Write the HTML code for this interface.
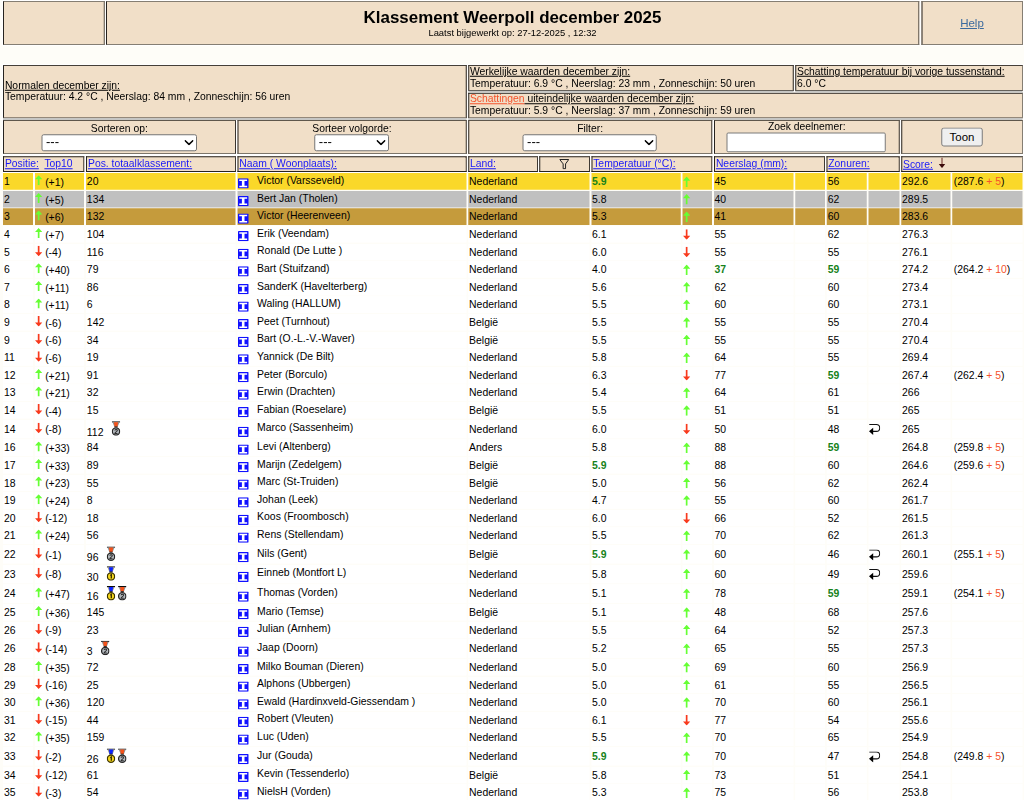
<!DOCTYPE html>
<html lang="nl"><head><meta charset="utf-8"><title>Klassement Weerpoll december 2025</title>
<style>
html,body{margin:0;padding:0;background:#fefdf8;overflow:hidden;}
body{width:1024px;height:800px;position:relative;font-family:"Liberation Sans",sans-serif;}
#w{position:absolute;left:0;top:0;width:4096px;height:3200px;transform:scale(0.25);transform-origin:0 0;
font-size:41.4px;line-height:47.2px;color:#000;overflow:hidden;}
#w *{box-sizing:border-box;}
.wb{position:absolute;background:#fff;}
.gg{position:absolute;background:#c6c6c4;}
.b{position:absolute;background:#f1dfc8;border:4.8px solid #24211e;}
.t{position:absolute;white-space:nowrap;}
.ct{position:absolute;white-space:nowrap;text-align:center;}
u,.l{text-decoration:underline;text-decoration-thickness:3.8px;text-underline-offset:4px;}
.l{color:#1818f8;}
.o{color:#f5532c;}
svg{position:absolute;overflow:visible;}
.sel{position:absolute;background:#fff;border:4px solid #747474;border-radius:8.8px;}
.inp{position:absolute;background:#fff;border:4px solid #7a7a7a;border-radius:6.4px;}
.btn{position:absolute;background:#efefef;border:4px solid #7a7a7a;border-radius:10.4px;text-align:center;font-size:45.8px;white-space:nowrap;}
.r{position:absolute;left:0;width:4096px;height:66.8px;}
.r.m{height:75.2px;}
.r i{position:absolute;top:0;height:100%;background:#fff;font-style:normal;white-space:nowrap;padding-left:3.6px;font-size:41.7px;line-height:68px;}
.r.m i{line-height:76.4px;}
.g i{background:#fad829;}
.s i{background:#c0c0c0;}
.z i{background:#c59b3c;}
.r b{color:#17821a;}

.c1{left:12px;width:120px;}
.c2{left:139.6px;width:196.4px;}
.c3{left:344px;width:598.4px;}
.c4{left:950px;width:915.6px;}
.c5{left:1872.8px;width:485.2px;}
.c6{left:2366px;width:357.2px;}
.c7{left:2730.4px;width:117.6px;}
.c8{left:2856.4px;width:317.6px;}
.c9{left:3181.2px;width:118.8px;}
.c10{left:3307.2px;width:160px;}
.c11{left:3474.4px;width:123.2px;}
.c12{left:3604.8px;width:197.2px;}
.c13{left:3809.2px;width:281.2px;}
.r .c2{padding-left:41px;padding-top:2.8px;}
.r .c4{padding-left:78.4px;line-height:57.2px;}
.r.m .c4{line-height:65.6px;}
.r.m .c3{padding-top:12px;}
.r .c1{padding-left:4.2px;}.r .c3{padding-left:3.4px;}.r .c6{padding-left:1.8px;}.r .c8{padding-left:1.4px;}.r .c10{padding-left:3.4px;}.r .c12{padding-left:3.4px;}.r .c13{padding-left:6px;}</style></head>
<body><div id="w">

<svg style="width:0;height:0;left:0;top:0" aria-hidden="true"><defs>
<symbol id="up" viewBox="0 0 7.3 10" preserveAspectRatio="none"><path d="M3.65 0 L7.3 4 L4.5 4 L4.5 10 L2.8 10 L2.8 4 L0 4Z" fill="#66ff33"/></symbol>
<symbol id="dn" viewBox="0 0 7.3 10.5" preserveAspectRatio="none"><path d="M3.65 10.5 L7.3 6.5 L4.5 6.5 L4.5 0 L2.8 0 L2.8 6.5 L0 6.5Z" fill="#f83a1c"/></symbol>
<symbol id="ic" viewBox="0 0 11 11" preserveAspectRatio="none"><rect width="11" height="11" rx="0.8" fill="#1010ff"/><path d="M1.3 1.3H9.4V2.9H6.7V8.1H9.4V9.7H1.3V8.1H4V2.9H1.3Z" fill="#fff"/></symbol>
<symbol id="ret" viewBox="0 0 11.2 11" preserveAspectRatio="none"><path d="M0.3 0.55H7.3 A3.4 3.4 0 0 1 7.3 7.35 H4" fill="none" stroke="#111" stroke-width="1.05"/><path d="M0 7.3 L4.2 3.8 L4.2 10.9Z" fill="#000"/></symbol>
<symbol id="fil" viewBox="0 0 10 10.4" preserveAspectRatio="none"><path d="M0.5 0.5H9.5L6.3 4.9V9.7L3.9 9.7V4.9Z" fill="none" stroke="#222" stroke-width="1" stroke-linejoin="round"/></symbol>
<symbol id="chv" viewBox="0 0 9 5.4" preserveAspectRatio="none"><path d="M0.7 0.7L4.5 4.4L8.3 0.7" fill="none" stroke="#000" stroke-width="1.55" stroke-linecap="round" stroke-linejoin="round"/></symbol>
<symbol id="sar" viewBox="0 0 6.2 10.6" preserveAspectRatio="none"><path d="M3.1 0V8" stroke="#7a4038" stroke-width="1.1"/><path d="M0 6.6H6.2L3.1 10.6Z" fill="#3d0c0c"/></symbol>
<symbol id="mg" viewBox="0 0 8.2 14.6" preserveAspectRatio="none"><rect x="0.1" y="0" width="8" height="1.15" fill="#0c0c0c"/><path d="M0.7 1.1H7.5L5.7 5.6H2.5Z" fill="#8f8f8f"/><path d="M2.1 1.1H6.1L5.5 5.5H2.7Z" fill="#0a22ff"/><rect x="2.6" y="5.2" width="3" height="0.9" fill="#1c1c1c"/><circle cx="4.1" cy="10.3" r="3.55" fill="#f3d51c" stroke="#3e3500" stroke-width="1.25"/><path d="M3.4 9.2L4.4 8.4V12.3" stroke="#2e2600" stroke-width="1.2" fill="none"/></symbol>
<symbol id="ms" viewBox="0 0 8.2 14.6" preserveAspectRatio="none"><rect x="0.1" y="0" width="8" height="1.15" fill="#0c0c0c"/><path d="M0.7 1.1H7.5L5.7 5.6H2.5Z" fill="#8f8f8f"/><path d="M2.1 1.1H6.1L5.5 5.5H2.7Z" fill="#f4521a"/><rect x="2.6" y="5.2" width="3" height="0.9" fill="#1c1c1c"/><circle cx="4.1" cy="10.3" r="3.55" fill="#b4b9be" stroke="#262626" stroke-width="1.25"/><path d="M3 9.3C3.2 8 5.4 8 5.4 9.3C5.4 10.4 3.2 11 3 12.2H5.6" stroke="#2c2c2c" stroke-width="1" fill="none"/></symbol>
</defs></svg>

<div class="wb" style="left:7px;top:0px;width:4089px;height:184px;"></div>
<div class="wb" style="left:7px;top:256px;width:4089px;height:436px;"></div>
<div class="b" style="left:12px;top:4px;width:407.2px;height:176px;border-color:#857e73 #5b544b #857e73 #27231f;"></div>
<div class="b" style="left:424px;top:4px;width:3253.2px;height:176px;border-color:#857e73 #5b544b #857e73 #27231f;"></div>
<div class="b" style="left:3685.6px;top:4px;width:406px;height:176px;border-color:#857e73 #857e73 #857e73 #27231f;"></div>
<div class="ct" style="left:424px;width:3252px;top:28.4px;font-size:67.7px;line-height:77.1px;font-weight:bold;">Klassement Weerpoll december 2025</div>
<div class="ct" style="left:424px;width:3252px;top:109.2px;font-size:37.6px;line-height:42.8px;">Laatst bijgewerkt op: 27-12-2025 , 12:32</div>
<div class="ct" style="left:3685.6px;width:404.8px;top:65.5px;font-size:46px;line-height:52.4px;"><span class="l" style="color:#3b6a9e">Help</span></div>
<div class="b" style="left:12px;top:260px;width:1854.8px;height:213.2px;border-color:#453f38 #27231f #756c60 #27231f;"></div>
<div class="b" style="left:1872.8px;top:260px;width:1302.4px;height:103.6px;border-color:#453f38 #27231f #453f38 #27231f;"></div>
<div class="b" style="left:3180.8px;top:260px;width:910.8px;height:103.6px;border-color:#453f38 #857e73 #453f38 #27231f;"></div>
<div class="b" style="left:1872.8px;top:370.8px;width:2218.8px;height:102.4px;border-color:#27231f #857e73 #756c60 #27231f;"></div>
<div class="gg" style="left:1872.8px;top:362.8px;width:1301.2px;height:8px;"></div>
<div class="gg" style="left:3180.8px;top:362.8px;width:909.6px;height:8px;"></div>
<div class="gg" style="left:12px;top:472.4px;width:1853.6px;height:7.6px;"></div>
<div class="gg" style="left:1872.8px;top:472.4px;width:2217.6px;height:7.6px;"></div>
<div class="t" style="left:19.6px;top:318px;"><u>Normalen december zijn:</u></div>
<div class="t" style="left:19.6px;top:364.4px;">Temperatuur: 4.2 °C , Neerslag: 84 mm , Zonneschijn: 56 uren</div>
<div class="t" style="left:1879.6px;top:262px;"><u>Werkelijke waarden december zijn:</u></div>
<div class="t" style="left:1879.6px;top:308.8px;">Temperatuur: 6.9 °C , Neerslag: 23 mm , Zonneschijn: 50 uren</div>
<div class="t" style="left:3188px;top:262px;"><u>Schatting temperatuur bij vorige tussenstand:</u></div>
<div class="t" style="left:3188px;top:308.8px;">6.0 °C</div>
<div class="t" style="left:1879.6px;top:372.4px;"><u class="o">Schattingen</u><u> uiteindelijke waarden december zijn:</u></div>
<div class="t" style="left:1879.6px;top:419.2px;">Temperatuur: 5.9 °C , Neerslag: 37 mm , Zonneschijn: 59 uren</div>
<div class="b" style="left:12px;top:480px;width:931.6px;height:136px;border-color:#5f574c #3a352f #7d766b #27231f;"></div>
<div class="b" style="left:950px;top:480px;width:916.8px;height:136px;border-color:#5f574c #3a352f #7d766b #27231f;"></div>
<div class="b" style="left:1872.8px;top:480px;width:976.4px;height:136px;border-color:#5f574c #3a352f #7d766b #27231f;"></div>
<div class="b" style="left:2856.4px;top:480px;width:742.4px;height:136px;border-color:#5f574c #3a352f #7d766b #27231f;"></div>
<div class="b" style="left:3604.8px;top:480px;width:486.8px;height:136px;border-color:#5f574c #857e73 #7d766b #27231f;"></div>
<div class="ct" style="left:12px;width:930.4px;top:489.2px;">Sorteren op:</div>
<div class="ct" style="left:950px;width:915.6px;top:489.2px;">Sorteer volgorde:</div>
<div class="ct" style="left:1872.8px;width:975.2px;top:489.2px;">Filter:</div>
<div class="ct" style="left:2856.4px;width:741.2px;top:484px;">Zoek deelnemer:</div>
<div class="sel" style="left:165.6px;top:537.2px;width:622px;height:67.6px;"></div>
<div class="t" style="left:184px;top:538.4px;font-size:52.4px;line-height:59.7px;">---</div>
<svg style="left:738px;top:560px;width:36px;height:21.6px"><use href="#chv"/></svg>
<div class="sel" style="left:1256.8px;top:537.2px;width:299.2px;height:67.6px;"></div>
<div class="t" style="left:1275.2px;top:538.4px;font-size:52.4px;line-height:59.7px;">---</div>
<svg style="left:1506.4px;top:560px;width:36px;height:21.6px"><use href="#chv"/></svg>
<div class="sel" style="left:2090px;top:537.2px;width:537.2px;height:67.6px;"></div>
<div class="t" style="left:2108.4px;top:538.4px;font-size:52.4px;line-height:59.7px;">---</div>
<svg style="left:2577.6px;top:560px;width:36px;height:21.6px"><use href="#chv"/></svg>
<div class="inp" style="left:2905.6px;top:530.4px;width:637.6px;height:78.4px;"></div>
<div class="btn" style="left:3764.8px;top:510.4px;width:166px;height:76px;line-height:68px;">Toon</div>
<div class="b" style="left:12px;top:624.8px;width:325.2px;height:63.2px;border-color:#27231f #403a34 #27231f #27231f;"></div>
<div class="b" style="left:344px;top:624.8px;width:599.6px;height:63.2px;border-color:#27231f #403a34 #27231f #27231f;"></div>
<div class="b" style="left:950px;top:624.8px;width:916.8px;height:63.2px;border-color:#27231f #403a34 #27231f #27231f;"></div>
<div class="b" style="left:1872.8px;top:624.8px;width:278.8px;height:63.2px;border-color:#27231f #403a34 #27231f #27231f;"></div>
<div class="b" style="left:2157.2px;top:624.8px;width:202.4px;height:63.2px;border-color:#27231f #403a34 #27231f #27231f;"></div>
<div class="b" style="left:2365.6px;top:624.8px;width:483.6px;height:63.2px;border-color:#27231f #403a34 #27231f #27231f;"></div>
<div class="b" style="left:2856.4px;top:624.8px;width:443.6px;height:63.2px;border-color:#27231f #403a34 #27231f #27231f;"></div>
<div class="b" style="left:3306.4px;top:624.8px;width:292.4px;height:63.2px;border-color:#27231f #403a34 #27231f #27231f;"></div>
<div class="b" style="left:3604.8px;top:624.8px;width:486.8px;height:63.2px;border-color:#27231f #857e73 #27231f #27231f;"></div>
<div class="t" style="left:19.6px;top:632px;"><span class="l">Positie:</span></div>
<div class="t" style="left:177.6px;top:632px;"><span class="l">Top10</span></div>
<div class="t" style="left:352px;top:632px;"><span class="l">Pos. totaalklassement:</span></div>
<div class="t" style="left:957.2px;top:632px;"><span class="l">Naam ( Woonplaats):</span></div>
<div class="t" style="left:1880px;top:632px;"><span class="l">Land:</span></div>
<svg style="left:2236.8px;top:636px;width:40px;height:41.6px"><use href="#fil"/></svg>
<div class="t" style="left:2372.8px;top:632px;"><span class="l">Temperatuur (°C):</span></div>
<div class="t" style="left:2863.6px;top:632px;"><span class="l">Neerslag (mm):</span></div>
<div class="t" style="left:3313.2px;top:632px;"><span class="l">Zonuren:</span></div>
<div class="t" style="left:3612px;top:634px;"><span class="l">Score:</span></div>
<svg style="left:3754.8px;top:630.4px;width:26px;height:42.4px"><use href="#sar"/></svg>
<div class="r g" style="top:692.4px"><i class="c1">1</i><i class="c2"><svg style="left:0.8px;top:8.8px;width:29.2px;height:40px"><use href="#up"/></svg>(+1)</i><i class="c3">20</i><i class="c4"><svg style="left:1.6px;top:20.8px;width:42.8px;height:40.8px"><use href="#ic"/></svg>Victor (Varsseveld)</i><i class="c5">Nederland</i><i class="c6"><b>5.9</b></i><i class="c7"><svg style="left:1.2px;top:13.2px;width:29.2px;height:41.6px"><use href="#up"/></svg></i><i class="c8">45</i><i class="c9"></i><i class="c10">56</i><i class="c11"></i><i class="c12">292.6</i><i class="c13">(287.6 <span class="o">+ 5</span>)</i></div>
<div class="r s" style="top:762.8px"><i class="c1">2</i><i class="c2"><svg style="left:0.8px;top:8.8px;width:29.2px;height:40px"><use href="#up"/></svg>(+5)</i><i class="c3">134</i><i class="c4"><svg style="left:1.6px;top:20.8px;width:42.8px;height:40.8px"><use href="#ic"/></svg>Bert Jan (Tholen)</i><i class="c5">Nederland</i><i class="c6">5.8</i><i class="c7"><svg style="left:1.2px;top:13.2px;width:29.2px;height:41.6px"><use href="#up"/></svg></i><i class="c8">40</i><i class="c9"></i><i class="c10">62</i><i class="c11"></i><i class="c12">289.5</i><i class="c13"></i></div>
<div class="r z" style="top:833.2px"><i class="c1">3</i><i class="c2"><svg style="left:0.8px;top:8.8px;width:29.2px;height:40px"><use href="#up"/></svg>(+6)</i><i class="c3">132</i><i class="c4"><svg style="left:1.6px;top:20.8px;width:42.8px;height:40.8px"><use href="#ic"/></svg>Victor (Heerenveen)</i><i class="c5">Nederland</i><i class="c6">5.3</i><i class="c7"><svg style="left:1.2px;top:13.2px;width:29.2px;height:41.6px"><use href="#up"/></svg></i><i class="c8">41</i><i class="c9"></i><i class="c10">60</i><i class="c11"></i><i class="c12">283.6</i><i class="c13"></i></div>
<div class="r" style="top:903.6px"><i class="c1">4</i><i class="c2"><svg style="left:0.8px;top:8.8px;width:29.2px;height:40px"><use href="#up"/></svg>(+7)</i><i class="c3">104</i><i class="c4"><svg style="left:1.6px;top:20.8px;width:42.8px;height:40.8px"><use href="#ic"/></svg>Erik (Veendam)</i><i class="c5">Nederland</i><i class="c6">6.1</i><i class="c7"><svg style="left:1.2px;top:13.2px;width:29.2px;height:42.4px"><use href="#dn"/></svg></i><i class="c8">55</i><i class="c9"></i><i class="c10">62</i><i class="c11"></i><i class="c12">276.3</i><i class="c13"></i></div>
<div class="r" style="top:974px"><i class="c1">5</i><i class="c2"><svg style="left:0.8px;top:8.8px;width:29.2px;height:42px"><use href="#dn"/></svg>(-4)</i><i class="c3">116</i><i class="c4"><svg style="left:1.6px;top:20.8px;width:42.8px;height:40.8px"><use href="#ic"/></svg>Ronald (De Lutte )</i><i class="c5">Nederland</i><i class="c6">6.0</i><i class="c7"><svg style="left:1.2px;top:13.2px;width:29.2px;height:42.4px"><use href="#dn"/></svg></i><i class="c8">55</i><i class="c9"></i><i class="c10">55</i><i class="c11"></i><i class="c12">276.1</i><i class="c13"></i></div>
<div class="r" style="top:1044.4px"><i class="c1">6</i><i class="c2"><svg style="left:0.8px;top:8.8px;width:29.2px;height:40px"><use href="#up"/></svg>(+40)</i><i class="c3">79</i><i class="c4"><svg style="left:1.6px;top:20.8px;width:42.8px;height:40.8px"><use href="#ic"/></svg>Bart (Stuifzand)</i><i class="c5">Nederland</i><i class="c6">4.0</i><i class="c7"><svg style="left:1.2px;top:13.2px;width:29.2px;height:41.6px"><use href="#up"/></svg></i><i class="c8"><b>37</b></i><i class="c9"></i><i class="c10"><b>59</b></i><i class="c11"></i><i class="c12">274.2</i><i class="c13">(264.2 <span class="o">+ 10</span>)</i></div>
<div class="r" style="top:1114.8px"><i class="c1">7</i><i class="c2"><svg style="left:0.8px;top:8.8px;width:29.2px;height:40px"><use href="#up"/></svg>(+11)</i><i class="c3">86</i><i class="c4"><svg style="left:1.6px;top:20.8px;width:42.8px;height:40.8px"><use href="#ic"/></svg>SanderK (Havelterberg)</i><i class="c5">Nederland</i><i class="c6">5.6</i><i class="c7"><svg style="left:1.2px;top:13.2px;width:29.2px;height:41.6px"><use href="#up"/></svg></i><i class="c8">62</i><i class="c9"></i><i class="c10">60</i><i class="c11"></i><i class="c12">273.4</i><i class="c13"></i></div>
<div class="r" style="top:1185.2px"><i class="c1">8</i><i class="c2"><svg style="left:0.8px;top:8.8px;width:29.2px;height:40px"><use href="#up"/></svg>(+11)</i><i class="c3">6</i><i class="c4"><svg style="left:1.6px;top:20.8px;width:42.8px;height:40.8px"><use href="#ic"/></svg>Waling (HALLUM)</i><i class="c5">Nederland</i><i class="c6">5.5</i><i class="c7"><svg style="left:1.2px;top:13.2px;width:29.2px;height:41.6px"><use href="#up"/></svg></i><i class="c8">60</i><i class="c9"></i><i class="c10">60</i><i class="c11"></i><i class="c12">273.1</i><i class="c13"></i></div>
<div class="r" style="top:1255.6px"><i class="c1">9</i><i class="c2"><svg style="left:0.8px;top:8.8px;width:29.2px;height:42px"><use href="#dn"/></svg>(-6)</i><i class="c3">142</i><i class="c4"><svg style="left:1.6px;top:20.8px;width:42.8px;height:40.8px"><use href="#ic"/></svg>Peet (Turnhout)</i><i class="c5">België</i><i class="c6">5.5</i><i class="c7"><svg style="left:1.2px;top:13.2px;width:29.2px;height:41.6px"><use href="#up"/></svg></i><i class="c8">55</i><i class="c9"></i><i class="c10">55</i><i class="c11"></i><i class="c12">270.4</i><i class="c13"></i></div>
<div class="r" style="top:1326px"><i class="c1">9</i><i class="c2"><svg style="left:0.8px;top:8.8px;width:29.2px;height:42px"><use href="#dn"/></svg>(-6)</i><i class="c3">34</i><i class="c4"><svg style="left:1.6px;top:20.8px;width:42.8px;height:40.8px"><use href="#ic"/></svg>Bart (O.-L.-V.-Waver)</i><i class="c5">België</i><i class="c6">5.5</i><i class="c7"><svg style="left:1.2px;top:13.2px;width:29.2px;height:41.6px"><use href="#up"/></svg></i><i class="c8">55</i><i class="c9"></i><i class="c10">55</i><i class="c11"></i><i class="c12">270.4</i><i class="c13"></i></div>
<div class="r" style="top:1396.4px"><i class="c1">11</i><i class="c2"><svg style="left:0.8px;top:8.8px;width:29.2px;height:42px"><use href="#dn"/></svg>(-6)</i><i class="c3">19</i><i class="c4"><svg style="left:1.6px;top:20.8px;width:42.8px;height:40.8px"><use href="#ic"/></svg>Yannick (De Bilt)</i><i class="c5">Nederland</i><i class="c6">5.8</i><i class="c7"><svg style="left:1.2px;top:13.2px;width:29.2px;height:41.6px"><use href="#up"/></svg></i><i class="c8">64</i><i class="c9"></i><i class="c10">55</i><i class="c11"></i><i class="c12">269.4</i><i class="c13"></i></div>
<div class="r" style="top:1466.8px"><i class="c1">12</i><i class="c2"><svg style="left:0.8px;top:8.8px;width:29.2px;height:40px"><use href="#up"/></svg>(+21)</i><i class="c3">91</i><i class="c4"><svg style="left:1.6px;top:20.8px;width:42.8px;height:40.8px"><use href="#ic"/></svg>Peter (Borculo)</i><i class="c5">Nederland</i><i class="c6">6.3</i><i class="c7"><svg style="left:1.2px;top:13.2px;width:29.2px;height:42.4px"><use href="#dn"/></svg></i><i class="c8">77</i><i class="c9"></i><i class="c10"><b>59</b></i><i class="c11"></i><i class="c12">267.4</i><i class="c13">(262.4 <span class="o">+ 5</span>)</i></div>
<div class="r" style="top:1537.2px"><i class="c1">13</i><i class="c2"><svg style="left:0.8px;top:8.8px;width:29.2px;height:40px"><use href="#up"/></svg>(+21)</i><i class="c3">32</i><i class="c4"><svg style="left:1.6px;top:20.8px;width:42.8px;height:40.8px"><use href="#ic"/></svg>Erwin (Drachten)</i><i class="c5">Nederland</i><i class="c6">5.4</i><i class="c7"><svg style="left:1.2px;top:13.2px;width:29.2px;height:41.6px"><use href="#up"/></svg></i><i class="c8">64</i><i class="c9"></i><i class="c10">61</i><i class="c11"></i><i class="c12">266</i><i class="c13"></i></div>
<div class="r" style="top:1607.6px"><i class="c1">14</i><i class="c2"><svg style="left:0.8px;top:8.8px;width:29.2px;height:42px"><use href="#dn"/></svg>(-4)</i><i class="c3">15</i><i class="c4"><svg style="left:1.6px;top:20.8px;width:42.8px;height:40.8px"><use href="#ic"/></svg>Fabian (Roeselare)</i><i class="c5">België</i><i class="c6">5.5</i><i class="c7"><svg style="left:1.2px;top:13.2px;width:29.2px;height:41.6px"><use href="#up"/></svg></i><i class="c8">51</i><i class="c9"></i><i class="c10">51</i><i class="c11"></i><i class="c12">265</i><i class="c13"></i></div>
<div class="r m" style="top:1678px"><i class="c1">14</i><i class="c2"><svg style="left:0.8px;top:13px;width:29.2px;height:42px"><use href="#dn"/></svg>(-8)</i><i class="c3">112<svg style="left:102.7px;top:6.8px;width:34px;height:58.4px"><use href="#ms"/></svg></i><i class="c4"><svg style="left:1.6px;top:29.2px;width:42.8px;height:40.8px"><use href="#ic"/></svg>Marco (Sassenheim)</i><i class="c5">Nederland</i><i class="c6">6.0</i><i class="c7"><svg style="left:1.2px;top:17.4px;width:29.2px;height:42.4px"><use href="#dn"/></svg></i><i class="c8">50</i><i class="c9"></i><i class="c10">48</i><i class="c11"><svg style="left:1.6px;top:18.4px;width:44.8px;height:44px"><use href="#ret"/></svg></i><i class="c12">265</i><i class="c13"></i></div>
<div class="r" style="top:1756.8px"><i class="c1">16</i><i class="c2"><svg style="left:0.8px;top:8.8px;width:29.2px;height:40px"><use href="#up"/></svg>(+33)</i><i class="c3">84</i><i class="c4"><svg style="left:1.6px;top:20.8px;width:42.8px;height:40.8px"><use href="#ic"/></svg>Levi (Altenberg)</i><i class="c5">Anders</i><i class="c6">5.8</i><i class="c7"><svg style="left:1.2px;top:13.2px;width:29.2px;height:41.6px"><use href="#up"/></svg></i><i class="c8">88</i><i class="c9"></i><i class="c10"><b>59</b></i><i class="c11"></i><i class="c12">264.8</i><i class="c13">(259.8 <span class="o">+ 5</span>)</i></div>
<div class="r" style="top:1827.2px"><i class="c1">17</i><i class="c2"><svg style="left:0.8px;top:8.8px;width:29.2px;height:40px"><use href="#up"/></svg>(+33)</i><i class="c3">89</i><i class="c4"><svg style="left:1.6px;top:20.8px;width:42.8px;height:40.8px"><use href="#ic"/></svg>Marijn (Zedelgem)</i><i class="c5">België</i><i class="c6"><b>5.9</b></i><i class="c7"><svg style="left:1.2px;top:13.2px;width:29.2px;height:41.6px"><use href="#up"/></svg></i><i class="c8">88</i><i class="c9"></i><i class="c10">60</i><i class="c11"></i><i class="c12">264.6</i><i class="c13">(259.6 <span class="o">+ 5</span>)</i></div>
<div class="r" style="top:1897.6px"><i class="c1">18</i><i class="c2"><svg style="left:0.8px;top:8.8px;width:29.2px;height:40px"><use href="#up"/></svg>(+23)</i><i class="c3">55</i><i class="c4"><svg style="left:1.6px;top:20.8px;width:42.8px;height:40.8px"><use href="#ic"/></svg>Marc (St-Truiden)</i><i class="c5">België</i><i class="c6">5.0</i><i class="c7"><svg style="left:1.2px;top:13.2px;width:29.2px;height:41.6px"><use href="#up"/></svg></i><i class="c8">56</i><i class="c9"></i><i class="c10">62</i><i class="c11"></i><i class="c12">262.4</i><i class="c13"></i></div>
<div class="r" style="top:1968px"><i class="c1">19</i><i class="c2"><svg style="left:0.8px;top:8.8px;width:29.2px;height:40px"><use href="#up"/></svg>(+24)</i><i class="c3">8</i><i class="c4"><svg style="left:1.6px;top:20.8px;width:42.8px;height:40.8px"><use href="#ic"/></svg>Johan (Leek)</i><i class="c5">Nederland</i><i class="c6">4.7</i><i class="c7"><svg style="left:1.2px;top:13.2px;width:29.2px;height:41.6px"><use href="#up"/></svg></i><i class="c8">55</i><i class="c9"></i><i class="c10">60</i><i class="c11"></i><i class="c12">261.7</i><i class="c13"></i></div>
<div class="r" style="top:2038.4px"><i class="c1">20</i><i class="c2"><svg style="left:0.8px;top:8.8px;width:29.2px;height:42px"><use href="#dn"/></svg>(-12)</i><i class="c3">18</i><i class="c4"><svg style="left:1.6px;top:20.8px;width:42.8px;height:40.8px"><use href="#ic"/></svg>Koos (Froombosch)</i><i class="c5">Nederland</i><i class="c6">6.0</i><i class="c7"><svg style="left:1.2px;top:13.2px;width:29.2px;height:42.4px"><use href="#dn"/></svg></i><i class="c8">66</i><i class="c9"></i><i class="c10">52</i><i class="c11"></i><i class="c12">261.5</i><i class="c13"></i></div>
<div class="r" style="top:2108.8px"><i class="c1">21</i><i class="c2"><svg style="left:0.8px;top:8.8px;width:29.2px;height:40px"><use href="#up"/></svg>(+24)</i><i class="c3">56</i><i class="c4"><svg style="left:1.6px;top:20.8px;width:42.8px;height:40.8px"><use href="#ic"/></svg>Rens (Stellendam)</i><i class="c5">Nederland</i><i class="c6">5.5</i><i class="c7"><svg style="left:1.2px;top:13.2px;width:29.2px;height:41.6px"><use href="#up"/></svg></i><i class="c8">70</i><i class="c9"></i><i class="c10">62</i><i class="c11"></i><i class="c12">261.3</i><i class="c13"></i></div>
<div class="r m" style="top:2179.2px"><i class="c1">22</i><i class="c2"><svg style="left:0.8px;top:13px;width:29.2px;height:42px"><use href="#dn"/></svg>(-1)</i><i class="c3">96<svg style="left:82.7px;top:6.8px;width:34px;height:58.4px"><use href="#ms"/></svg></i><i class="c4"><svg style="left:1.6px;top:29.2px;width:42.8px;height:40.8px"><use href="#ic"/></svg>Nils (Gent)</i><i class="c5">België</i><i class="c6"><b>5.9</b></i><i class="c7"><svg style="left:1.2px;top:17.4px;width:29.2px;height:41.6px"><use href="#up"/></svg></i><i class="c8">60</i><i class="c9"></i><i class="c10">46</i><i class="c11"><svg style="left:1.6px;top:18.4px;width:44.8px;height:44px"><use href="#ret"/></svg></i><i class="c12">260.1</i><i class="c13">(255.1 <span class="o">+ 5</span>)</i></div>
<div class="r m" style="top:2258px"><i class="c1">23</i><i class="c2"><svg style="left:0.8px;top:13px;width:29.2px;height:42px"><use href="#dn"/></svg>(-8)</i><i class="c3">30<svg style="left:82.7px;top:6.8px;width:34px;height:58.4px"><use href="#mg"/></svg></i><i class="c4"><svg style="left:1.6px;top:29.2px;width:42.8px;height:40.8px"><use href="#ic"/></svg>Einneb (Montfort L)</i><i class="c5">Nederland</i><i class="c6">5.8</i><i class="c7"><svg style="left:1.2px;top:17.4px;width:29.2px;height:41.6px"><use href="#up"/></svg></i><i class="c8">60</i><i class="c9"></i><i class="c10">49</i><i class="c11"><svg style="left:1.6px;top:18.4px;width:44.8px;height:44px"><use href="#ret"/></svg></i><i class="c12">259.6</i><i class="c13"></i></div>
<div class="r m" style="top:2336.8px"><i class="c1">24</i><i class="c2"><svg style="left:0.8px;top:13px;width:29.2px;height:40px"><use href="#up"/></svg>(+47)</i><i class="c3">16<svg style="left:82.7px;top:6.8px;width:34px;height:58.4px"><use href="#mg"/></svg><svg style="left:128.3px;top:6.8px;width:34px;height:58.4px"><use href="#ms"/></svg></i><i class="c4"><svg style="left:1.6px;top:29.2px;width:42.8px;height:40.8px"><use href="#ic"/></svg>Thomas (Vorden)</i><i class="c5">Nederland</i><i class="c6">5.1</i><i class="c7"><svg style="left:1.2px;top:17.4px;width:29.2px;height:41.6px"><use href="#up"/></svg></i><i class="c8">78</i><i class="c9"></i><i class="c10"><b>59</b></i><i class="c11"></i><i class="c12">259.1</i><i class="c13">(254.1 <span class="o">+ 5</span>)</i></div>
<div class="r" style="top:2415.6px"><i class="c1">25</i><i class="c2"><svg style="left:0.8px;top:8.8px;width:29.2px;height:40px"><use href="#up"/></svg>(+36)</i><i class="c3">145</i><i class="c4"><svg style="left:1.6px;top:20.8px;width:42.8px;height:40.8px"><use href="#ic"/></svg>Mario (Temse)</i><i class="c5">België</i><i class="c6">5.1</i><i class="c7"><svg style="left:1.2px;top:13.2px;width:29.2px;height:41.6px"><use href="#up"/></svg></i><i class="c8">48</i><i class="c9"></i><i class="c10">68</i><i class="c11"></i><i class="c12">257.6</i><i class="c13"></i></div>
<div class="r" style="top:2486px"><i class="c1">26</i><i class="c2"><svg style="left:0.8px;top:8.8px;width:29.2px;height:42px"><use href="#dn"/></svg>(-9)</i><i class="c3">23</i><i class="c4"><svg style="left:1.6px;top:20.8px;width:42.8px;height:40.8px"><use href="#ic"/></svg>Julian (Arnhem)</i><i class="c5">Nederland</i><i class="c6">5.5</i><i class="c7"><svg style="left:1.2px;top:13.2px;width:29.2px;height:41.6px"><use href="#up"/></svg></i><i class="c8">64</i><i class="c9"></i><i class="c10">52</i><i class="c11"></i><i class="c12">257.3</i><i class="c13"></i></div>
<div class="r m" style="top:2556.4px"><i class="c1">26</i><i class="c2"><svg style="left:0.8px;top:13px;width:29.2px;height:42px"><use href="#dn"/></svg>(-14)</i><i class="c3">3<svg style="left:59.6px;top:6.8px;width:34px;height:58.4px"><use href="#ms"/></svg></i><i class="c4"><svg style="left:1.6px;top:29.2px;width:42.8px;height:40.8px"><use href="#ic"/></svg>Jaap (Doorn)</i><i class="c5">Nederland</i><i class="c6">5.2</i><i class="c7"><svg style="left:1.2px;top:17.4px;width:29.2px;height:41.6px"><use href="#up"/></svg></i><i class="c8">65</i><i class="c9"></i><i class="c10">55</i><i class="c11"></i><i class="c12">257.3</i><i class="c13"></i></div>
<div class="r" style="top:2635.2px"><i class="c1">28</i><i class="c2"><svg style="left:0.8px;top:8.8px;width:29.2px;height:40px"><use href="#up"/></svg>(+35)</i><i class="c3">72</i><i class="c4"><svg style="left:1.6px;top:20.8px;width:42.8px;height:40.8px"><use href="#ic"/></svg>Milko Bouman (Dieren)</i><i class="c5">Nederland</i><i class="c6">5.0</i><i class="c7"><svg style="left:1.2px;top:13.2px;width:29.2px;height:41.6px"><use href="#up"/></svg></i><i class="c8">69</i><i class="c9"></i><i class="c10">60</i><i class="c11"></i><i class="c12">256.9</i><i class="c13"></i></div>
<div class="r" style="top:2705.6px"><i class="c1">29</i><i class="c2"><svg style="left:0.8px;top:8.8px;width:29.2px;height:42px"><use href="#dn"/></svg>(-16)</i><i class="c3">25</i><i class="c4"><svg style="left:1.6px;top:20.8px;width:42.8px;height:40.8px"><use href="#ic"/></svg>Alphons (Ubbergen)</i><i class="c5">Nederland</i><i class="c6">5.0</i><i class="c7"><svg style="left:1.2px;top:13.2px;width:29.2px;height:41.6px"><use href="#up"/></svg></i><i class="c8">61</i><i class="c9"></i><i class="c10">55</i><i class="c11"></i><i class="c12">256.5</i><i class="c13"></i></div>
<div class="r" style="top:2776px"><i class="c1">30</i><i class="c2"><svg style="left:0.8px;top:8.8px;width:29.2px;height:40px"><use href="#up"/></svg>(+36)</i><i class="c3">120</i><i class="c4"><svg style="left:1.6px;top:20.8px;width:42.8px;height:40.8px"><use href="#ic"/></svg>Ewald (Hardinxveld-Giessendam )</i><i class="c5">Nederland</i><i class="c6">5.0</i><i class="c7"><svg style="left:1.2px;top:13.2px;width:29.2px;height:41.6px"><use href="#up"/></svg></i><i class="c8">70</i><i class="c9"></i><i class="c10">60</i><i class="c11"></i><i class="c12">256.1</i><i class="c13"></i></div>
<div class="r" style="top:2846.4px"><i class="c1">31</i><i class="c2"><svg style="left:0.8px;top:8.8px;width:29.2px;height:42px"><use href="#dn"/></svg>(-15)</i><i class="c3">44</i><i class="c4"><svg style="left:1.6px;top:20.8px;width:42.8px;height:40.8px"><use href="#ic"/></svg>Robert (Vleuten)</i><i class="c5">Nederland</i><i class="c6">6.1</i><i class="c7"><svg style="left:1.2px;top:13.2px;width:29.2px;height:42.4px"><use href="#dn"/></svg></i><i class="c8">77</i><i class="c9"></i><i class="c10">54</i><i class="c11"></i><i class="c12">255.6</i><i class="c13"></i></div>
<div class="r" style="top:2916.8px"><i class="c1">32</i><i class="c2"><svg style="left:0.8px;top:8.8px;width:29.2px;height:40px"><use href="#up"/></svg>(+35)</i><i class="c3">159</i><i class="c4"><svg style="left:1.6px;top:20.8px;width:42.8px;height:40.8px"><use href="#ic"/></svg>Luc (Uden)</i><i class="c5">Nederland</i><i class="c6">5.5</i><i class="c7"><svg style="left:1.2px;top:13.2px;width:29.2px;height:41.6px"><use href="#up"/></svg></i><i class="c8">70</i><i class="c9"></i><i class="c10">65</i><i class="c11"></i><i class="c12">254.9</i><i class="c13"></i></div>
<div class="r m" style="top:2987.2px"><i class="c1">33</i><i class="c2"><svg style="left:0.8px;top:13px;width:29.2px;height:42px"><use href="#dn"/></svg>(-2)</i><i class="c3">26<svg style="left:82.7px;top:6.8px;width:34px;height:58.4px"><use href="#mg"/></svg><svg style="left:128.3px;top:6.8px;width:34px;height:58.4px"><use href="#ms"/></svg></i><i class="c4"><svg style="left:1.6px;top:29.2px;width:42.8px;height:40.8px"><use href="#ic"/></svg>Jur (Gouda)</i><i class="c5">Nederland</i><i class="c6"><b>5.9</b></i><i class="c7"><svg style="left:1.2px;top:17.4px;width:29.2px;height:41.6px"><use href="#up"/></svg></i><i class="c8">70</i><i class="c9"></i><i class="c10">47</i><i class="c11"><svg style="left:1.6px;top:18.4px;width:44.8px;height:44px"><use href="#ret"/></svg></i><i class="c12">254.8</i><i class="c13">(249.8 <span class="o">+ 5</span>)</i></div>
<div class="r" style="top:3066px"><i class="c1">34</i><i class="c2"><svg style="left:0.8px;top:8.8px;width:29.2px;height:42px"><use href="#dn"/></svg>(-12)</i><i class="c3">61</i><i class="c4"><svg style="left:1.6px;top:20.8px;width:42.8px;height:40.8px"><use href="#ic"/></svg>Kevin (Tessenderlo)</i><i class="c5">België</i><i class="c6">5.8</i><i class="c7"><svg style="left:1.2px;top:13.2px;width:29.2px;height:41.6px"><use href="#up"/></svg></i><i class="c8">73</i><i class="c9"></i><i class="c10">51</i><i class="c11"></i><i class="c12">254.1</i><i class="c13"></i></div>
<div class="r" style="top:3136.4px"><i class="c1">35</i><i class="c2"><svg style="left:0.8px;top:8.8px;width:29.2px;height:42px"><use href="#dn"/></svg>(-3)</i><i class="c3">54</i><i class="c4"><svg style="left:1.6px;top:20.8px;width:42.8px;height:40.8px"><use href="#ic"/></svg>NielsH (Vorden)</i><i class="c5">Nederland</i><i class="c6">5.3</i><i class="c7"><svg style="left:1.2px;top:13.2px;width:29.2px;height:41.6px"><use href="#up"/></svg></i><i class="c8">75</i><i class="c9"></i><i class="c10">56</i><i class="c11"></i><i class="c12">253.8</i><i class="c13"></i></div>
</div></body></html>
